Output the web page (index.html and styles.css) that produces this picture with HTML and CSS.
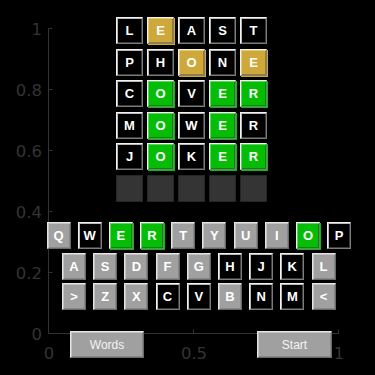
FILE: index.html
```html
<!DOCTYPE html>
<html lang="en">
<head>
    <meta charset="UTF-8">
    <meta name="viewport" content="width=device-width, initial-scale=1.0">
    <title>Wordle</title>
    <link rel="stylesheet" href="styles.css">
</head>
<body>
    <div class="figure">
        <!-- axes drawn behind the widgets -->
        <svg class="axes" width="375" height="375" viewBox="0 0 375 375">
            <g stroke="#333" stroke-width="1" fill="none">
                <line x1="48.5" y1="28.5" x2="48.5" y2="333.5"/>
                <line x1="48.5" y1="333.5" x2="338.5" y2="333.5"/>
                <line x1="48.5" y1="28.5" x2="52.5" y2="28.5"/>
                <line x1="48.5" y1="89.5" x2="52.5" y2="89.5"/>
                <line x1="48.5" y1="150.5" x2="52.5" y2="150.5"/>
                <line x1="48.5" y1="211.5" x2="52.5" y2="211.5"/>
                <line x1="48.5" y1="272.5" x2="52.5" y2="272.5"/>
                <line x1="193.5" y1="333.5" x2="193.5" y2="329.5"/>
                <line x1="338.5" y1="333.5" x2="338.5" y2="329.5"/>
            </g>
            <g class="tick-label" text-anchor="end">
                <text x="42" y="35">1</text>
                <text x="42" y="96">0.8</text>
                <text x="42" y="157">0.6</text>
                <text x="42" y="218">0.4</text>
                <text x="42" y="279">0.2</text>
                <text x="42" y="340">0</text>
            </g>
            <g class="tick-label" text-anchor="middle">
                <text x="49" y="359">0</text>
                <text x="194" y="359">0.5</text>
                <text x="339" y="359">1</text>
            </g>
        </svg>

        <div class="board">
            <div class="tile">L</div><div class="tile gold">E</div><div class="tile">A</div><div class="tile">S</div><div class="tile">T</div>
            <div class="tile">P</div><div class="tile">H</div><div class="tile gold">O</div><div class="tile">N</div><div class="tile gold">E</div>
            <div class="tile">C</div><div class="tile green">O</div><div class="tile">V</div><div class="tile green">E</div><div class="tile green">R</div>
            <div class="tile">M</div><div class="tile green">O</div><div class="tile">W</div><div class="tile green">E</div><div class="tile">R</div>
            <div class="tile">J</div><div class="tile green">O</div><div class="tile">K</div><div class="tile green">E</div><div class="tile green">R</div>
            <div class="tile empty"></div><div class="tile empty"></div><div class="tile empty"></div><div class="tile empty"></div><div class="tile empty"></div>
        </div>

        <div class="keyboard">
            <div class="key-row top">
                <div class="key grey">Q</div>
                <div class="key">W</div>
                <div class="key green">E</div>
                <div class="key green">R</div>
                <div class="key grey">T</div>
                <div class="key grey">Y</div>
                <div class="key grey">U</div>
                <div class="key grey">I</div>
                <div class="key green">O</div>
                <div class="key">P</div>
            </div>
            <div class="key-row">
                <div class="key grey">A</div>
                <div class="key grey">S</div>
                <div class="key grey">D</div>
                <div class="key grey">F</div>
                <div class="key grey">G</div>
                <div class="key">H</div>
                <div class="key">J</div>
                <div class="key">K</div>
                <div class="key grey">L</div>
            </div>
            <div class="key-row">
                <div class="key grey">&gt;</div>
                <div class="key grey">Z</div>
                <div class="key grey">X</div>
                <div class="key">C</div>
                <div class="key">V</div>
                <div class="key grey">B</div>
                <div class="key">N</div>
                <div class="key">M</div>
                <div class="key grey">&lt;</div>
            </div>
        </div>

        <div class="buttons">
            <button class="btn words">Words</button>
            <button class="btn start">Start</button>
        </div>
    </div>
</body>
</html>
```

FILE: styles.css
```css
html, body {
    margin: 0;
    padding: 0;
    background-color: #000;
}
.figure {
    position: relative;
    width: 375px;
    height: 375px;
    overflow: hidden;
    font-family: 'Liberation Sans', Arial, sans-serif;
}
.axes {
    position: absolute;
    top: 0;
    left: 0;
}
.tick-label {
    font-family: 'DejaVu Sans', sans-serif;
    font-size: 16.5px;
    fill: #333;
}
.board {
    position: relative;
    display: grid;
    grid-template-columns: repeat(5, 27px);
    grid-auto-rows: 27px;
    column-gap: 4px;
    row-gap: 4.6px;
    padding: 17px 0 0 116px;
}
.tile,
.key {
    box-sizing: border-box;
    display: flex;
    align-items: center;
    justify-content: center;
    color: #fff;
    font-weight: bold;
    font-size: 13px;
    background-color: #000;
    border: 1px solid;
    border-color: #f2f2f2 #7c7c7c #7c7c7c #f2f2f2;
    box-shadow: inset 1px 1px 0 #b8b8b8, inset -1px -1px 0 #3c3c3c;
}
.gold {
    background-color: #cfa83b;
    box-shadow: inset 1px 1px 0 #e6c870, inset -1px -1px 0 #9c7c28, 1px 1px 0 #cfa83b;
}
.green {
    background-color: #06bd06;
    box-shadow: inset 1px 1px 0 #58d858, inset -1px -1px 0 #058a05, 1px 1px 0 #06bd06;
}
.grey {
    background-color: #a0a0a0;
    border-color: #e4e4e4 #6a6a6a #6a6a6a #e4e4e4;
    box-shadow: inset 1px 1px 0 #c4c4c4, inset -1px -1px 0 #888;
}
.tile.empty {
    background-color: #343434;
    border-color: #262626;
    box-shadow: none;
}
.keyboard {
    position: relative;
    display: flex;
    flex-direction: column;
    gap: 3.7px;
    margin-top: 20px;
}
.key-row {
    display: flex;
    gap: 7.2px;
    padding-left: 62px;
}
.key-row.top {
    padding-left: 46.5px;
}
.key {
    width: 24px;
    height: 27px;
}
.buttons {
    position: relative;
    display: flex;
    gap: 113px;
    padding-left: 70px;
    margin-top: 21px;
}
.btn {
    box-sizing: border-box;
    height: 27px;
    padding: 0;
    font-family: 'Liberation Sans', Arial, sans-serif;
    font-size: 12px;
    color: #f4f4f4;
    background-color: #a0a0a0;
    border: 1px solid;
    border-color: #e4e4e4 #6a6a6a #6a6a6a #e4e4e4;
    box-shadow: inset 1px 1px 0 #c4c4c4, inset -1px -1px 0 #888;
}
.words {
    width: 74px;
}
.start {
    width: 75px;
}
```
